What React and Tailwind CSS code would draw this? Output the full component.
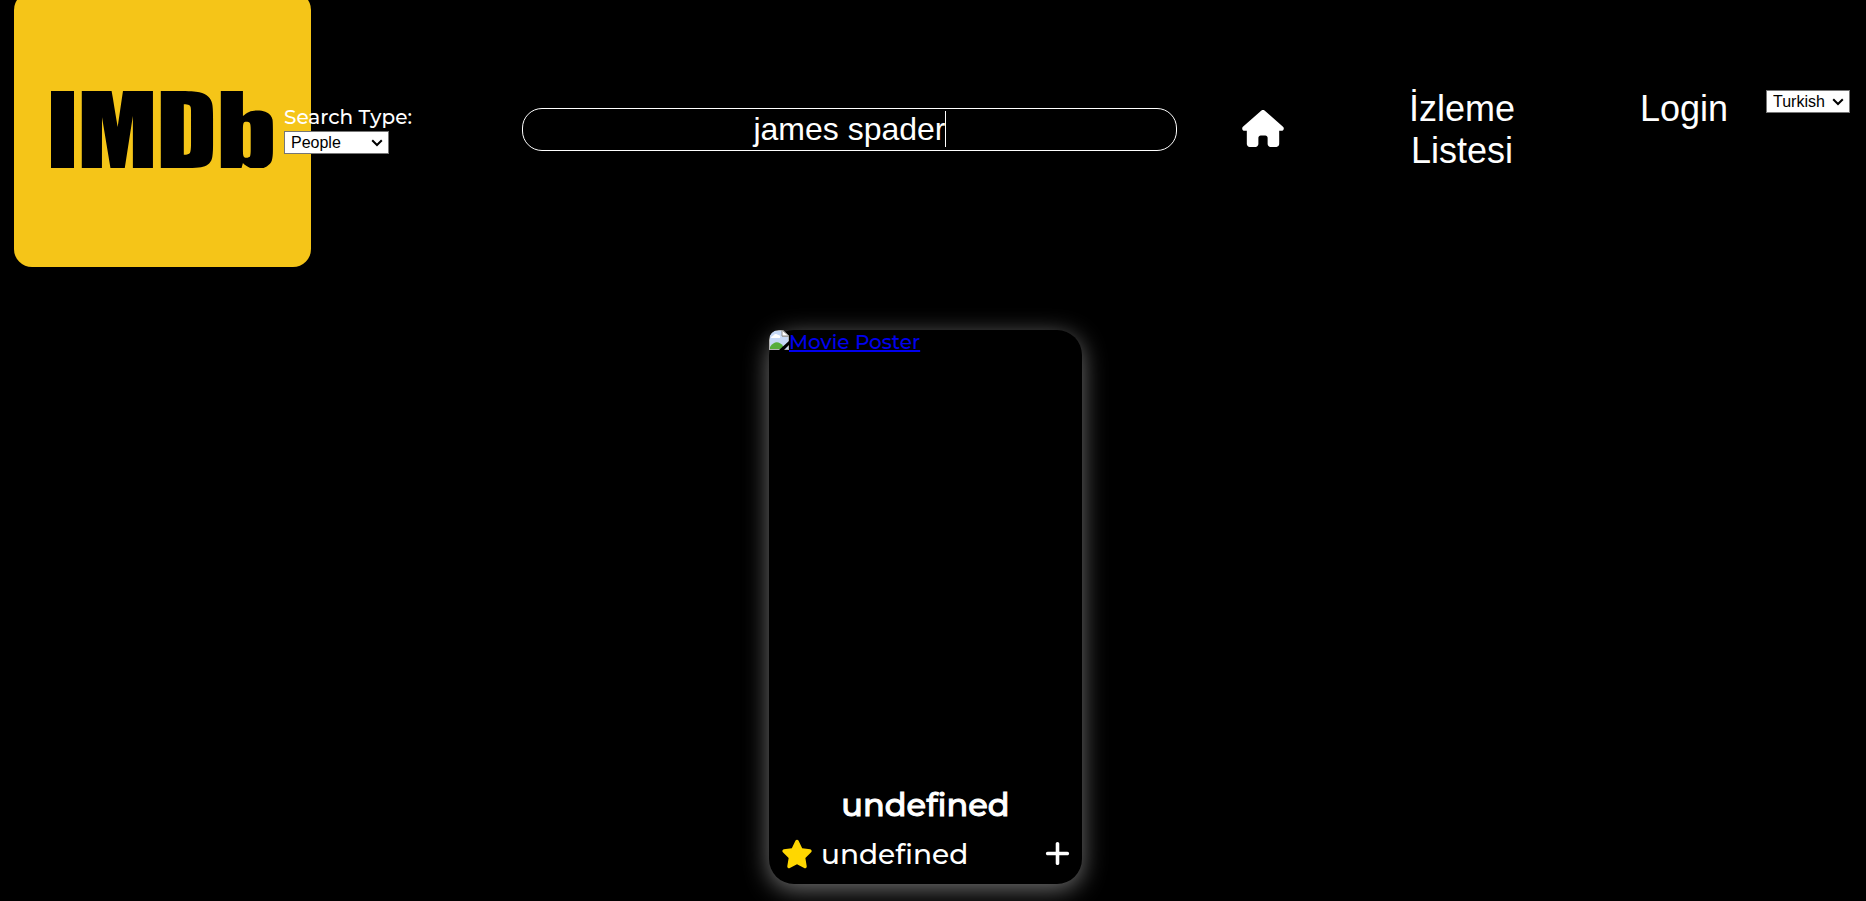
import { useState } from "react";
import { FaHouse, FaPlus, FaStar } from "react-icons/fa6";
import { SiImdb } from "react-icons/si";

function Select({ id, label, value, onChange, options }) {
  return (
    <div className="relative">
      <select
        id={id}
        aria-label={label}
        value={value}
        onChange={(e) => onChange(e.target.value)}
        className="block h-[23px] w-full appearance-none border border-[#767676] bg-white pl-[6px] font-['Liberation_Sans',sans-serif] text-[16px] leading-[20px] text-black"
      >
        {options.map((option) => (
          <option key={option}>{option}</option>
        ))}
      </select>
      <svg
        viewBox="0 0 12 8"
        aria-hidden="true"
        className="pointer-events-none absolute right-[6px] top-2 h-2 w-3"
        fill="none"
        stroke="#000"
        strokeWidth="2"
      >
        <path d="M1.200 1.200 6 6l4.800-4.800" />
      </svg>
    </div>
  );
}

function Logo() {
  return (
    <a
      href="#home"
      aria-label="IMDb"
      className="-mt-2 flex h-[275px] w-[297px] shrink-0 items-center justify-center rounded-[18px] bg-[#f5c518]"
    >
      <SiImdb
        viewBox="2.89 8.26 18.55 7.37"
        preserveAspectRatio="none"
        className="h-[77px] w-[224px] text-black"
      />
    </a>
  );
}

function SearchType() {
  const [type, setType] = useState("People");
  return (
    <div className="-ml-[27px] mt-[104px] w-[140px] shrink-0">
      <label htmlFor="search-type" className="block pb-px text-[20px] leading-[26px] whitespace-nowrap">
        Search Type:
      </label>
      <div className="w-[105px]">
        <Select id="search-type" value={type} onChange={setType} options={["Movies", "People"]} />
      </div>
    </div>
  );
}

function SearchBox() {
  return (
    <div className="relative ml-[98px] mt-[108px] h-[43px] flex-1">
      <input
        type="text"
        aria-label="Search"
        defaultValue="james spader"
        className="h-full w-full rounded-[20px] border border-white bg-black text-center font-['Liberation_Sans',sans-serif] text-[32px] leading-[37px] text-white outline-none"
      />
      <span
        aria-hidden="true"
        className="pointer-events-none absolute left-1/2 top-[3px] ml-24 h-9 w-px bg-white"
      />
    </div>
  );
}

function Header() {
  const [language, setLanguage] = useState("Turkish");
  return (
    <header className="flex items-start pl-[14px] pr-4">
      <Logo />
      <SearchType />
      <SearchBox />
      <nav className="flex items-start font-['Liberation_Sans',sans-serif] text-[36px] font-normal leading-[42px]">
        <a href="#home" aria-label="Home" className="ml-[65px] mt-[110px]">
          <FaHouse className="h-[37px] w-[42px]" />
        </a>
        <a href="#watchlist" className="ml-[119px] mt-[88px] w-[118px] text-center">
          İzleme Listesi
        </a>
        <a href="#login" className="ml-[119px] mt-[88px]">
          Login
        </a>
      </nav>
      <div className="ml-[38px] mt-[90px] w-[84px]">
        <Select label="Language" value={language} onChange={setLanguage} options={["Turkish", "English"]} />
      </div>
    </header>
  );
}

function BrokenImage() {
  return (
    <svg viewBox="0 0 20 20" className="h-5 w-5 shrink-0 rounded-tl-[10px]" aria-hidden="true">
      <path d="M0 0h14l6 6v14H0z" fill="#b4b4b4" />
      <path d="M1 1h12v6h6v12H1z" fill="#c6d9f7" />
      <path d="M2 8a2 2 0 0 1 2-2 3 3 0 0 1 5-1 2 2 0 0 1 2 3z" fill="#fff" />
      <path d="M1 19v-2c4-6 9-6 13-1v3z" fill="#57ad3c" />
      <path d="M13 0v6h7z" fill="#fff" stroke="#8c8c8c" />
      <path d="M10 20 20 11v4l-5 5z" fill="#000" />
    </svg>
  );
}

function PersonCard() {
  return (
    <article className="flex h-[554px] w-[313px] flex-col rounded-[25px] bg-black shadow-[0_5px_25px_rgba(255,255,255,0.45)]">
      <a href="#person" className="flex flex-1 items-start text-[20px] leading-[24px] text-[#0000ee] underline">
        <BrokenImage />
        Movie Poster
      </a>
      <h2 className="text-center text-[32px] leading-[40px] [-webkit-text-stroke:1px_white]">undefined</h2>
      <div className="flex h-[59px] items-center px-3 pb-[2px]">
        <FaStar className="h-[30px] w-[32px] text-[#ffd700]" />
        <span className="ml-2 flex-1 text-[28px] leading-[36px]">undefined</span>
        <button type="button" aria-label="Add to watchlist">
          <FaPlus className="h-[29px] w-[25px]" />
        </button>
      </div>
    </article>
  );
}

export default function App() {
  return (
    <div className="min-h-screen bg-black font-['Montserrat','Inter',sans-serif] font-medium text-white">
      <Header />
      <main className="flex justify-center pb-4 pr-[15px] pt-[63px]">
        <PersonCard />
      </main>
    </div>
  );
}
